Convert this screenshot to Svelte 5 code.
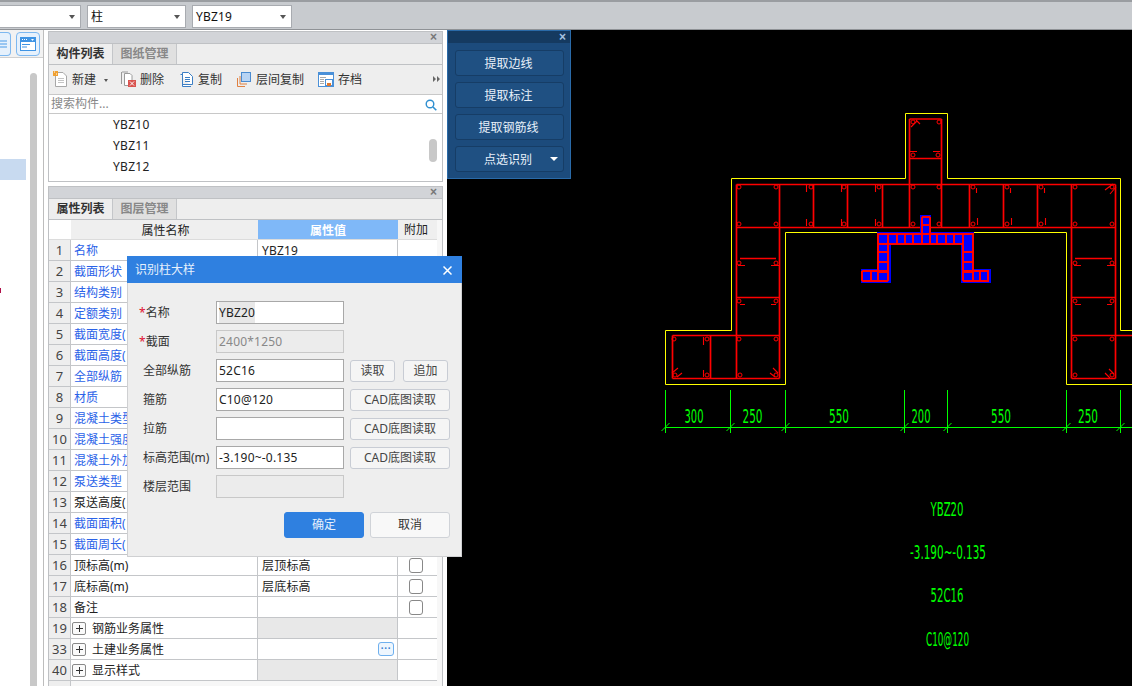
<script>
  const rows = [
    ['1','名称','YBZ19',0,1],['2','截面形状','',0,1],['3','结构类别','',0,1],['4','定额类别','',0,1],
    ['5','截面宽度(','',0,1],['6','截面高度(','',0,1],['7','全部纵筋','',0,1],['8','材质','',0,1],
    ['9','混凝土类型','',0,1],['10','混凝土强度','',0,1],['11','混凝土外加','',0,1],['12','泵送类型','',0,1],
    ['13','泵送高度(','',0,0],['14','截面面积(','',0,1],['15','截面周长(','',0,1],
    ['16','顶标高(m)','层顶标高',1,0],['17','底标高(m)','层底标高',1,0],['18','备注','',1,0]
  ];
  const groups = [['19','钢筋业务属性',true,false],['33','土建业务属性',false,true],['40','显示样式',true,false]];
  const marks = [];
  for (const x of [739,776,811,844,879,913,939,973,1007,1041,1075,1112]) { marks.push([x,187]); marks.push([x,224]); }
  for (const p of [[913,122],[939,122],[913,155],[938,155],[739,263],[776,263],[1075,263],[1112,263],[739,301],[776,301],[1075,301],[1112,301],[674,339],[707,339],[739,339],[776,339],[675,375],[707,375],[740,375],[776,375],[1075,339],[1112,339],[1075,375],[1112,375]]) marks.push(p);
  const redLines = 'M909.5 119V227M941.5 119V227M909.5 119H941.5M909.5 158.5H941.5M736.5 184.5H1115.5M736.5 227.5H1115.5M736.5 184.5V378.5M779.5 184.5V378.5M813.5 184.5V227M847.5 184.5V227M882.5 184.5V227M969.5 184.5V227M1003.5 184.5V227M1037.5 184.5V227M1071.5 184.5V378.5M1115.5 184.5V378.5M740 258.5H776M1075 258.5H1112M736.5 297.5H779.5M1071.5 297.5H1115.5M672.5 335.5H779.5M672.5 378.5H779.5M672.5 335.5V378.5M710.5 335.5V378.5M1071.5 335.5H1132M1071.5 378.5H1115.5';
  const hooks = 'M806.5 185V192M841.5 185V192M875.5 185V192M976.5 188V193M1010.5 188V193M1044.5 188V193M806.5 219V226M841.5 219V226M875.5 219V226M977.5 218V225M1011.5 218V225M1045.5 218V225M910 151.5H917M933 151.5H940M911 127L917 121M916 120L920 124M1105 190L1113 184M1110 194L1116 187M738 265.5H745M771 265.5H779M1074 265.5H1081M1107 265.5H1115M740 304.5H745M771 304.5H776M1075 304.5H1081M1107 304.5H1112M703.5 337V345M703.5 370V377M672 373L678 368M677 377L682 373M770 373L775 377M773 368L778 373M1105 373L1110 378M1109 369L1114 374';
  const grid = 'M878 233.5H973M878 244H963M878 252H888M878 262H888M878 272H888M862 271H888M862 281H888M963 252H973M963 262H973M963 272H973M963 271H989M963 281H989M878 233V281M888 233V281M897 233V244M905 233V244M913 233V244M922 217V244M930 217V244M937 233V244M946 233V244M954 233V244M963 233V281M973 233V281M862 271V281M871 271V281M980 271V281M988 271V281M922 217H930M922 225H930';
  const ticks = [665.5,730.5,785.5,904.5,947.5,1066.5,1120.5];
  const dims = [['300',684.5,19],['250',742.5,20],['550',829,20],['200',911.5,19],['550',991,20],['250',1078,20]];
  const notes = [['YBZ20',930.5,516,33],['-3.190~-0.135',910,559,76],['52C16',930.5,602,33],['C10@120',926,646,43]];
  const fields = [
    {label:'名称',star:true,value:'YBZ20',sel:true},
    {label:'截面',star:true,value:'2400*1250',off:true},
    {label:'全部纵筋',value:'52C16',btns:['读取','追加']},
    {label:'箍筋',value:'C10@120',btns:['CAD底图读取']},
    {label:'拉筋',value:'',btns:['CAD底图读取']},
    {label:'标高范围(m)',value:'-3.190~-0.135',btns:['CAD底图读取']},
    {label:'楼层范围',value:'',off:true}
  ];
</script>

<div class="root">
  <header class="topbar">
    <div class="sel s1"><i class="caret"></i></div>
    <div class="sel s2"><span>柱</span><i class="caret"></i></div>
    <div class="sel s3"><span>YBZ19</span><i class="caret"></i></div>
  </header>
  <div class="main">
    <aside class="side">
      <div class="side-top">
        <div class="mini m1"><svg width="10" height="22" viewBox="0 0 10 22"><path d="M0 8H7M0 11H7M0 14H7" stroke="#4a9be8" fill="none"/></svg></div>
        <div class="mini m2"><svg width="16" height="14" viewBox="0 0 16 14"><rect x=".5" y=".5" width="15" height="13" fill="#fff" stroke="#3f94e4"/><rect x="0" y="0" width="16" height="5" fill="#3f94e4"/><path d="M2 2.5H3M4 2.5H5M6 2.5H7" stroke="#fff"/><path d="M11 2H14L12.5 4Z" fill="#fff"/><path d="M2 7.5H10M2 10H7" stroke="#3f94e4"/></svg></div>
      </div>
      <div class="side-body">
        <div class="tree"><div class="picked"></div><div class="dot"></div></div>
        <div class="sb"></div>
      </div>
    </aside>
    <section class="panels">
      <div class="panel p1">
        <div class="phead"><span class="px">×</span></div>
        <div class="tabs"><div class="tab on">构件列表</div><div class="tab">图纸管理</div></div>
        <div class="tools">
          <div class="tool t-new"><svg width="15" height="16" viewBox="0 0 15 16"><path d="M2.5 1.500H10L13.500 5V15.500H2.500Z" fill="#fff" stroke="#a8a8a8"/><path d="M5 7.500H11M5 9.500H11M5 11.500H11" stroke="#c4c4c4"/><rect x="0" y="0" width="5" height="5" fill="#f0a030"/><path d="M1 1H2M3 3H4" stroke="#fff"/></svg><span>新建</span><i class="tcaret"></i></div>
          <div class="tool t-del"><svg width="15" height="16" viewBox="0 0 15 16"><path d="M3.500 2.500H9L11 4.500V14.500H3.500Z" fill="#fff" stroke="#9a9a9a"/><path d="M1 1H7" stroke="#9a9a9a" fill="none"/><path d="M.5 1V13" stroke="#9a9a9a"/><rect x="7" y="9" width="8" height="7" fill="#d9534f"/><path d="M9 10.500L13 14.500M13 10.500L9 14.500" stroke="#fff"/></svg><span>删除</span></div>
          <div class="tool t-copy"><svg width="13" height="15" viewBox="0 0 13 15"><path d="M.5 2.500H2.500V14.500H11M2.500 .5H8.500L12.500 4.500V12.500H2.500Z" fill="#fff" stroke="#3d7fc4"/><path d="M5 5.500H10M5 7.500H10M5 9.500H10" stroke="#3d7fc4"/></svg><span>复制</span></div>
          <div class="tool t-floor"><svg width="14" height="15" viewBox="0 0 14 15"><path d="M.5 6V14.500H8M3 4V12H10" fill="none" stroke="#e08040"/><rect x="4.500" y=".5" width="9" height="9" fill="#b8d4f4" stroke="#4a8bd0"/></svg><span>层间复制</span></div>
          <div class="tool t-save"><svg width="16" height="15" viewBox="0 0 16 15"><rect x=".5" y=".5" width="15" height="14" fill="#fff" stroke="#4a90d8"/><rect x="0" y="0" width="16" height="3" fill="#4a90d8"/><path d="M2 5.500H8M2 7.500H6M2 9.500H6M2 11.500H6" stroke="#aaa"/><rect x="7.500" y="7.500" width="7" height="6" fill="#fff" stroke="#4a90d8"/><rect x="9" y="11" width="4" height="3" fill="#e07a30"/></svg><span>存档</span></div>
          <svg class="more" width="7" height="6" viewBox="0 0 7 6"><path d="M0 0L3 3L0 6ZM4 0L7 3L4 6Z" fill="#666"/></svg>
        </div>
        <div class="search"><span>搜索构件...</span><svg width="12" height="12" viewBox="0 0 12 12"><circle cx="5" cy="5" r="3.800" fill="none" stroke="#2f8fd0" stroke-width="1.400"/><path d="M8 8L11.300 11.300" stroke="#2f8fd0" stroke-width="1.600"/></svg></div>
        <div class="list">
          <div>YBZ10</div><div>YBZ11</div><div>YBZ12</div>
          <div class="lsb"></div>
        </div>
      </div>
      <div class="panel p2">
        <div class="phead"><span class="px">×</span></div>
        <div class="tabs"><div class="tab on">属性列表</div><div class="tab">图层管理</div></div>
        <div class="table">
          <div class="tr th"><div class="n blank"></div><div class="c1">属性名称</div><div class="c2 hot">属性值</div><div class="c3">附加</div></div>
          {#each rows as r}
            <div class="tr"><div class="n">{r[0]}</div><div class="c1 name" class:link={r[4]}>{r[1]}</div><div class="c2 val">{r[2]}</div><div class="c3">{#if r[3]}<i class="check"></i>{/if}</div></div>
          {/each}
          {#each groups as g}
            <div class="tr"><div class="n">{g[0]}</div><div class="c1 name group"><i class="plus"></i><span>{g[1]}</span></div><div class="c2 val" class:gray={g[2]}>{#if g[3]}<span class="dots">···</span>{/if}</div><div class="c3"></div></div>
          {/each}
          <div class="tr tail"><div class="n"></div></div>
        </div>
      </div>
    </section>
    <section class="cad">
      <svg width="685" height="656" viewBox="447 30 685 656">
        <g fill="none">
          <path stroke="#ffff00" d="M665.500 330.500H731.500V178.500H905.500V113.500H947.500V178.500H1120.500V330.500H1132M1132 384.500H1066.500V232.500H785.500V384.500H665.500V330.500"/>
          <path stroke="#ff0000" stroke-width="1.700" d={redLines}/>
          <path stroke="#ff0000" stroke-width="1.100" d={hooks}/>
          {#each marks as m}<circle cx={m[0]} cy={m[1]} r="2" stroke="#ff0000"/>{/each}
          <path class="bluefill" d="M920 215H931V232H974V245H974V283H961V245H891V283H861V269H877V232H920Z"/>
          <path class="bluefill" d="M961 269H991V283H961Z"/>
          <path class="crisp" stroke="#ff0000" stroke-width="2" d={grid}/>
          <path stroke="#00ff00" d="M665 427.500H1132"/>
          {#each ticks as t}
            <path stroke="#00ff00" d="M{t} 390V433M{t-4} 431L{t+4} 423"/>
          {/each}
        </g>
        {#each dims as d}
          <text class="cadt" x={d[1]} y="423" textLength={d[2]} lengthAdjust="spacingAndGlyphs">{d[0]}</text>
        {/each}
        {#each notes as n}
          <text class="cadt" x={n[1]} y={n[2]} textLength={n[3]} lengthAdjust="spacingAndGlyphs">{n[0]}</text>
        {/each}
      </svg>
    </section>
  </div>

  <div class="float">
    <div class="fhead"><span>×</span></div>
    <div class="fbody">
      <div class="fbtn">提取边线</div>
      <div class="fbtn">提取标注</div>
      <div class="fbtn">提取钢筋线</div>
      <div class="fbtn split"><span>点选识别</span><i></i></div>
    </div>
  </div>

  <div class="dialog">
    <div class="dtitle"><span>识别柱大样</span><svg width="9" height="9" viewBox="0 0 9 9"><path d="M.5 .5L8.500 8.500M8.500 .5L.5 8.500" stroke="#fff" stroke-width="1.500"/></svg></div>
    <div class="dbody">
      {#each fields as f}
        <div class="frow">
          <div class="flabel" class:starred={f.star}>{#if f.star}<b>*</b>{/if}{f.label}</div>
          <div class="finput" class:off={f.off}>{#if f.sel}<span class="selected">{f.value}</span>{:else}{f.value}{/if}</div>
          {#if f.btns}
            <div class="fbtns">
              {#each f.btns as b}<div class="dbtn" class:small={f.btns.length > 1}>{b}</div>{/each}
            </div>
          {/if}
        </div>
      {/each}
      <div class="actions">
        <div class="act ok">确定</div>
        <div class="act">取消</div>
      </div>
    </div>
  </div>
</div>

<style>
  :global(body) { margin: 0; overflow: hidden; background: #fff; }
  .root {
    position: relative; width: 1132px; height: 686px; overflow: hidden;
    display: flex; flex-direction: column; background: #fff; color: #222;
    font: 12px/1.2 "Noto Sans", "Noto Sans CJK SC", sans-serif;
  }
  .topbar {
    height: 30px; box-sizing: border-box; flex: none; display: flex; align-items: flex-start; gap: 6px;
    padding-top: 3px; background: #c8cbcf;
    border-top: 2px solid #9a9da1; border-bottom: 1px solid #8f9296;
  }
  .sel {
    height: 23px; box-sizing: border-box; background: #fff; border: 1px solid #a8abb0;
    display: flex; align-items: center; justify-content: space-between; padding: 1px 4px 0 3px;
    font-size: 12px; color: #111; letter-spacing: .2px;
  }
  .s1 { width: 82px; margin-left: -1px; justify-content: flex-end; }
  .s2 { width: 99px; }
  .s3 { width: 100px; }
  .caret { width: 0; height: 0; border: 3.500px solid transparent; border-top: 4px solid #555; border-bottom: 0; margin-right: 1px; }

  .main { flex: 1; display: flex; min-height: 0; }
  .side { width: 44px; flex: none; box-sizing: border-box; border-right: 1px solid #bdbdbd; display: flex; flex-direction: column; }
  .side-top { height: 28px; flex: none; position: relative; background: #f2f2f2; border-bottom: 1px solid #d0d0d0; padding-top: 2px; box-sizing: border-box; display: flex; gap: 5px; }
  .mini { height: 24px; box-sizing: border-box; border: 1px solid #7db8f0; border-radius: 4px; background: #e6f1fc; display: flex; align-items: center; justify-content: center; }
  .m1 { width: 11px; border-left: 0; border-radius: 0 4px 4px 0; }
  .m2 { width: 24px; }
  .side-body { flex: 1; display: flex; background: #fff; }
  .tree { width: 30px; flex: none; padding-top: 101px; position: relative; }
  .picked { width: 26px; height: 21px; background: #c8daf0; }
  .dot { position: absolute; left: 0; top: 230px; width: 1px; height: 5px; background: #b0104a; }
  .sb { width: 7px; margin-top: 15px; background: #c8c8c8; border-radius: 4px 4px 0 0; }

  .panels { width: 403px; flex: none; box-sizing: border-box; padding: 1px 4px 0; display: flex; flex-direction: column; gap: 4px; background: #fff; }
  .panel { box-sizing: border-box; border: 1px solid #bfc1c4; background: #fff; display: flex; flex-direction: column; }
  .p1 { height: 151px; flex: none; }
  .p2 { flex: 1; border-bottom: 0; min-height: 0; }
  .phead { height: 11px; flex: none; background: #d2d4d8; position: relative; }
  .px { position: absolute; right: 5px; top: -1px; color: #777; font: bold 12px/12px "Liberation Sans", sans-serif; }
  .tabs { height: 22px; flex: none; display: flex; background: #eeeeee; border-bottom: 1px solid #bfc1c4; border-top: 1px solid #bfc1c4; box-sizing: border-box; }
  .tab { width: 64px; box-sizing: border-box; border-right: 1px solid #c4c6c9; background: #e0e0e0; color: #888; font-weight: 700; display: flex; align-items: center; justify-content: center; }
  .tab.on { background: #eeeeee; color: #333; }
  .tools { height: 30px; flex: none; background: #eeeeee; border-bottom: 1px solid #c8c8c8; box-sizing: border-box; display: flex; align-items: center; padding-left: 4px; position: relative; color: #333; }
  .tool { display: flex; align-items: center; gap: 4px; }
  .tool span { padding-top: 2px; }
  .t-new { margin-right: 13px; }
  .t-del { margin-right: 16px; }
  .t-copy { margin-right: 15px; }
  .t-copy span { margin-left: 1px; }
  .t-floor { margin-right: 14px; }
  .t-floor span { margin-left: 1px; }
  .tcaret { width: 0; height: 0; border: 2.500px solid transparent; border-top: 3px solid #555; border-bottom: 0; margin-left: 4px; margin-top: 2px; }
  .more { position: absolute; right: 2px; top: 11px; }
  .search { height: 19px; flex: none; box-sizing: border-box; border-bottom: 1px solid #c8c8c8; padding: 1px 5px 0 2px; display: flex; align-items: center; justify-content: space-between; color: #888; }
  .list { flex: 1; position: relative; padding-left: 64px; color: #222; letter-spacing: .3px; }
  .list > div:not(.lsb) { height: 21px; line-height: 21px; }
  .lsb { position: absolute; right: 5px; top: 25px; width: 8px; height: 23px; border-radius: 4px; background: #c8c8c8; }

  .table { flex: 1; background: #f7f7f7; display: flex; flex-direction: column; }
  .tr { height: 21px; flex: none; box-sizing: border-box; display: flex; border-bottom: 1px solid #c4c6c9; background: #fff; width: 388px; }
  .tr.th { height: 20px; border-bottom: 1px solid #dcdcdc; background: #efefef; text-align: center; line-height: 21px; }
  .th .c1 { padding-left: 2px; }
  .n { width: 22px; flex: none; box-sizing: border-box; background: #eeeeee; border-right: 1px solid #c4c6c9; text-align: center; line-height: 21px; color: #444; font-size: 13px; }
  .n.blank { background: #fff; border-right: 0; }
  .c1 { width: 187px; flex: none; box-sizing: border-box; border-right: 1px solid #c4c6c9; }
  .c2 { width: 140px; flex: none; box-sizing: border-box; border-right: 1px solid #c4c6c9; }
  .c3 { flex: 1; display: flex; align-items: center; justify-content: center; padding-right: 3px; }
  .th .c1, .th .c2 { border-right: 0; }
  .hot { background: #7fb8f8; color: #fff; font-weight: 700; }
  .name { padding-left: 3px; line-height: 22px; white-space: nowrap; }
  .link { color: #2a62e8; }
  .val { padding-left: 4px; line-height: 22px; position: relative; letter-spacing: .2px; }
  .gray { background: #e8e8e8; }
  .group { display: flex; align-items: center; padding-left: 1px; }
  .group span { padding-top: 1px; }
  .check { width: 12px; height: 13px; border: 1px solid #888; border-radius: 3px; background: #fff; }
  .plus { width: 12px; height: 11px; margin-right: 6px; border: 1px solid #888; border-radius: 2px; background: linear-gradient(#333,#333) center/7px 1px no-repeat, linear-gradient(#333,#333) center/1px 7px no-repeat, #fafafa; }
  .dots { position: absolute; right: 3px; top: 3px; width: 14px; height: 12px; border: 1px solid #6fb0ee; border-radius: 3px; background: #eef6fe; color: #3a7fd0; font: bold 10px/11px "Liberation Sans", sans-serif; text-align: center; }
  .tail { border: 0; background: transparent; height: 8px; }

  .cad { flex: 1; background: #000; min-width: 0; }
  .cad svg { display: block; }
  .crisp { shape-rendering: crispEdges; }
  .bluefill { fill: #0000ff; }
  .cadt { fill: #00ff00; font: 19px "DejaVu Sans", sans-serif; }

  .float { position: absolute; left: 447px; top: 30px; width: 124px; height: 149px; box-sizing: border-box; border: 1px solid #2a6aa8; background: #1c4b7c; }
  .fhead { height: 12px; background: #153a60; position: relative; color: #a8c4e0; }
  .fhead span { position: absolute; right: 4px; top: 0; font: bold 12px/12px "Liberation Sans", sans-serif; }
  .fbody { padding: 7px 6px 0 7px; display: flex; flex-direction: column; gap: 6px; }
  .fbtn { height: 26px; box-sizing: border-box; border: 1px solid #163d66; border-radius: 3px; background: #1f5082; color: #e8f0fa; display: flex; align-items: center; justify-content: center; padding: 2px 2px 0 0; }
  .split { position: relative; padding-right: 3px; }
  .split i { position: absolute; right: 5px; top: 10px; width: 0; height: 0; border: 4px solid transparent; border-top: 4px solid #fff; border-bottom: 0; }

  .dialog { position: absolute; left: 127px; top: 256px; width: 335px; height: 301px; box-sizing: border-box; background: #eeeeee; border: 1px solid #cfd0d2; border-top: 0; }
  .dtitle { height: 27px; margin: 0 -1px; background: #2f80e0; color: #e6f0fc; display: flex; align-items: center; justify-content: space-between; padding: 1px 10px 0 8px; box-sizing: border-box; }
  .dbody { padding: 18px 11px 0; }
  .frow { display: flex; height: 23px; margin-bottom: 6px; align-items: center; }
  .flabel { width: 77px; flex: none; padding: 2px 0 0 4px; box-sizing: border-box; color: #333; white-space: nowrap; }
  .flabel.starred { padding-left: 0; }
  .flabel b { color: #e01030; font-weight: 400; }
  .finput { width: 128px; height: 23px; flex: none; box-sizing: border-box; background: #fff; border: 1px solid #a8a8a8; padding: 0 2px; line-height: 21px; color: #222; white-space: nowrap; letter-spacing: .2px; }
  .finput.off { background: #ececec; border-color: #c8c8c8; color: #888; }
  .selected { background: #e8e8e8; display: inline-block; }
  .fbtns { display: flex; gap: 8px; margin-left: 6px; }
  .dbtn { width: 100px; height: 22px; box-sizing: border-box; border: 1px solid #c8ccd4; border-radius: 3px; background: #f5f5f5; color: #444; display: flex; align-items: center; justify-content: center; padding-top: 1px; }
  .dbtn.small { width: 45px; }
  .actions { display: flex; justify-content: flex-end; gap: 6px; margin-top: 14px; }
  .act { width: 80px; height: 26px; box-sizing: border-box; border: 1px solid #d0d3d8; border-radius: 3px; background: #f8f8f8; color: #333; display: flex; align-items: center; justify-content: center; }
  .ok { background: #2f80e0; border-color: #2f80e0; color: #e6f0fc; }
</style>
